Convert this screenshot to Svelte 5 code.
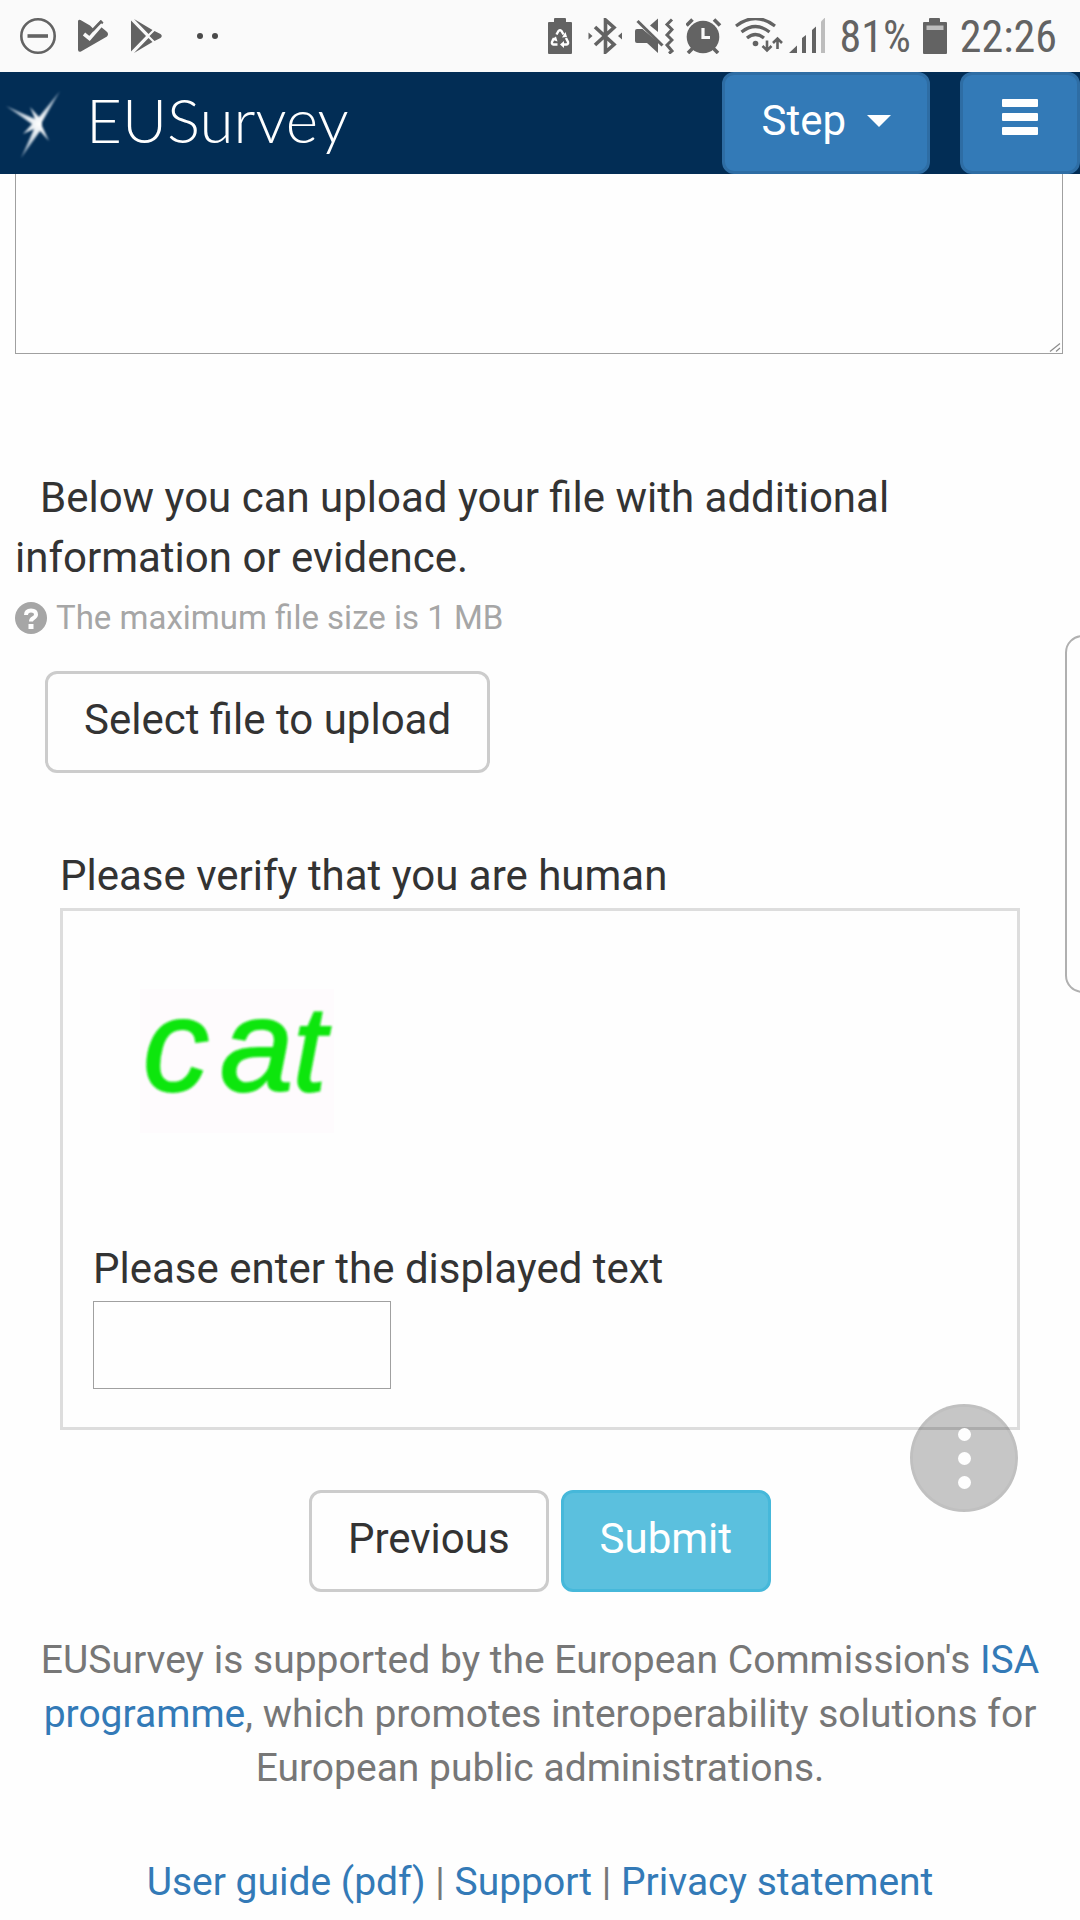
<script lang="ts">
	let comments = $state('');
	let captcha = $state('');

	const links = [
		{ label: 'User guide (pdf)', href: '#guide' },
		{ label: 'Support', href: '#support' },
		{ label: 'Privacy statement', href: '#privacy' }
	];
</script>

<div class="screen">
	<div class="status-bar">
		<div class="notifications">
			<svg width="36" height="36" viewBox="20 18 36 36" fill="none" stroke="#636363">
				<circle cx="38" cy="36" r="16.7" stroke-width="2.6" />
				<path d="M27.5 36h20.5" stroke-width="3.6" />
			</svg>
			<svg width="31" height="36" viewBox="78 18 31 36">
				<path d="M78 21.500q0-2.500 2.500-1.500l9.500 5.500 3 3 8-8.500 2.500 2.500-3 4 5.500 4.500q3.500 2.500 1 5.500L81 51.500q-3 1-3-2z" fill="#636363" />
				<path d="M84 34l5.500 4.500L102 24" fill="none" stroke="#fafafa" stroke-width="3.600" />
				<path d="M92.500 30.500l9-9.500" fill="none" stroke="#636363" stroke-width="2.600" />
			</svg>
			<svg width="32" height="36" viewBox="131 18 32 36" fill="#636363">
				<path d="M131 20.500L146 36 131 51.500zM134 19l18.500 11-4 4zM134 53l18.500-11-4-4zM154.500 31l6 3q2.500 2 0 4l-6 3-5-5z" />
			</svg>
			<svg class="dots" width="22" height="36" viewBox="197 18 22 36" fill="#4a4a4a">
				<circle cx="200" cy="36" r="3" />
				<circle cx="215" cy="36" r="3" />
			</svg>
		</div>
		<div class="indicators">
			<svg width="24" height="36" viewBox="547 18 24 36">
				<path d="M553 22v-3q0-1 1-1h10q1 0 1 1v3h5q1 0 1 1v30q0 1-1 1h-22q-1 0-1-1V23q0-1 1-1z" fill="#636363" />
				<path d="M555.500 34.500l2-3.500q1.500-1.500 3 0l2 3.500M565 38l2 4q.5 2-1.500 2.500h-4M556.500 44.500h-4q-2-.5-1.500-2.500l2-4" fill="none" stroke="#fff" stroke-width="2.400" />
				<path d="M561 37.500l5-.5-1.500-5zM563 41v7l-4-3.500zM550.500 39.500l4.500-3 1.500 5z" fill="#fff" />
			</svg>
			<svg width="39" height="36" viewBox="583 18 39 36">
				<path d="M594 27l19 17.500-8.500 7.500V20l8.500 7.500L594 45" fill="none" stroke="#636363" stroke-width="3.600" />
				<path d="M587.500 32.500l4 3.500-4 3.500zM621 32.500l-4 3.500 4 3.500z" fill="#636363" />
			</svg>
			<svg width="39" height="36" viewBox="634 18 39 36">
				<path d="M634 31q0-2 2-2h5.500L657 42v11L646 43h-10q-2 0-2-2zM649 25.500l8-7V32z" fill="#636363" />
				<path d="M636.500 21l25 24.500" fill="none" stroke="#636363" stroke-width="3" />
				<path d="M671 19.500l-5 5 5 5-5 5.500 5 5-5 5 5 6-3 2.500" fill="none" stroke="#636363" stroke-width="3" />
			</svg>
			<svg width="36" height="36" viewBox="685 18 36 36">
				<circle cx="702" cy="37" r="16.300" fill="#636363" />
				<path d="M685.500 25.500l6-6M713 19.500l6 6M692 48l-5 5M712 48l5 5" stroke="#636363" stroke-width="3.600" />
				<path d="M702 28v9.500h7" fill="none" stroke="#fafafa" stroke-width="3.200" />
			</svg>
			<svg width="94" height="36" viewBox="733 18 94 36">
				<g fill="none" stroke="#636363" stroke-width="3.200">
					<path d="M735 26q19.500-15 39 0M740.500 32q14-11 28 0M746 38q8.500-7 17 0" />
					<path d="M766 40.500v10M761.500 46l4.500 4.500 4.500-4.500M776.500 49V39M772 43l4.500-4.500 4.500 4.500" stroke-width="2.600" />
				</g>
				<circle cx="754.500" cy="43.500" r="2.800" fill="#636363" />
				<path d="M788 53l8-7.500V53zM801 38l4-3v18h-4zM811 30l4-3.500V53h-4z" fill="#636363" />
				<path d="M820 21.500l4-4V53h-4z" fill="#bdbdbd" />
			</svg>
			<span>81%</span>
			<svg width="25" height="36" viewBox="922 18 25 36">
				<path d="M928 22v-3q0-1 1-1h9q1 0 1 1v3h6q1 0 1 1v30q0 1-1 1h-22q-1 0-1-1V23q0-1 1-1z" fill="#636363" />
				<path d="M925.500 25.500h17v4.500h-17z" fill="#bdbdbd" />
			</svg>
			<span>22:26</span>
		</div>
	</div>

	<header>
		<a class="brand" href="#home">
			<svg width="60" height="76" viewBox="4 84 60 76" aria-hidden="true">
				<defs>
					<filter id="soft"><feGaussianBlur stdDeviation="0.9" /></filter>
					<radialGradient id="ray" gradientUnits="userSpaceOnUse" cx="39" cy="123" r="38">
						<stop offset="0" stop-color="#fff" />
						<stop offset="0.3" stop-color="#dfe7ee" />
						<stop offset="1" stop-color="#7a94ac" />
					</radialGradient>
				</defs>
				<path filter="url(#soft)" fill="url(#ray)" d="M60 90L42 121v4l7 15-9-10-19 27 13-29-11 5 9-10L6 105l29 13-5-12 9 10z" />
			</svg>
			<span>EUSurvey</span>
		</a>
		<div class="header-actions">
			<button class="btn primary step" type="button">
				Step
				<svg width="24" height="12" viewBox="0 0 24 12" fill="#fff"><path d="M0 0h24L12 12z" /></svg>
			</button>
			<button class="btn primary menu" type="button" aria-label="Menu">
				<svg width="36" height="36" viewBox="0 0 36 36" fill="#fff">
					<rect width="36" height="8" rx="1" />
					<rect y="14" width="36" height="8" rx="1" />
					<rect y="28" width="36" height="8" rx="1" />
				</svg>
			</button>
		</div>
	</header>

	<main>
		<div class="comments">
			<textarea aria-label="Comments" bind:value={comments}></textarea>
			<svg class="grip" width="12" height="9" viewBox="0 0 12 9" fill="none" stroke="#8c8c8c">
				<path d="M1 8.500L11 .500M7 8.500l4-3.500" stroke-width="1.200" />
			</svg>
		</div>

		<section class="upload">
			<p class="question">Below you can upload your file with additional information or evidence.</p>
			<p class="help">
				<svg width="32" height="32" viewBox="0 0 32 32">
					<circle cx="16" cy="16" r="16" fill="#a6a6a6" />
					<path d="M11 13q0-4.500 5-4.500t5 4q0 2-2.500 3.500t-2.500 3.500" fill="none" stroke="#fff" stroke-width="4" />
					<rect x="13.500" y="22" width="5" height="5" fill="#fff" />
				</svg>
				The maximum file size is 1 MB
			</p>
			<button class="btn default" type="button">Select file to upload</button>
		</section>

		<section class="verify">
			<p>Please verify that you are human</p>
			<div class="captcha-box">
				<svg class="captcha" width="194" height="150" viewBox="0 0 194 150" role="img">
					<defs>
						<filter id="smudge"><feGaussianBlur stdDeviation="0.8" /></filter>
					</defs>
					<rect y="4" width="194" height="144" fill="#fefbfd" />
					<g filter="url(#smudge)">
						<text class="glyph" x="3" y="106">c</text>
						<text class="glyph" x="80" y="106">a</text>
						<text class="glyph small" x="153" y="106">t</text>
					</g>
				</svg>
				<label for="captcha">Please enter the displayed text</label>
				<input id="captcha" type="text" autocomplete="off" bind:value={captcha} />
			</div>
		</section>

		<div class="actions">
			<button class="btn default" type="button">Previous</button>
			<button class="btn info" type="submit">Submit</button>
		</div>
	</main>

	<footer>
		<p>
			EUSurvey is supported by the European Commission's <a href="#isa">ISA programme</a>, which
			promotes interoperability solutions for European public administrations.
		</p>
		<nav>
			{#each links as link, i}
				{#if i > 0}{' | '}{/if}<a href={link.href}>{link.label}</a>
			{/each}
		</nav>
	</footer>

	<div class="edge-panel"></div>
	<button class="fab" type="button" aria-label="More options">
		<i></i><i></i><i></i>
	</button>
</div>

<style>
	:global(body) {
		background: #fefefe;
	}

	.screen {
		position: relative;
		overflow: hidden;
		font-family: Roboto, sans-serif;
		font-size: 42px;
		line-height: 60px;
		color: #333;
	}

	svg {
		display: block;
		flex: none;
	}

	p {
		margin: 0;
	}

	a {
		color: #337ab7;
		text-decoration: none;
	}

	.status-bar {
		display: flex;
		justify-content: space-between;
		align-items: center;
		height: 72px;
		padding: 0 23px 0 20px;
		background: #fafafa;
		color: #636363;
		font-family: 'Roboto Condensed', 'Liberation Sans Narrow', Roboto, sans-serif;
		font-size: 44px;
	}

	.indicators span {
		padding-top: 2px;
	}

	.notifications {
		display: flex;
		gap: 22px;
	}

	.dots {
		margin-left: 12px;
	}

	.indicators {
		display: flex;
		align-items: center;
		gap: 12px;
	}

	header {
		position: relative;
		display: flex;
		justify-content: space-between;
		height: 102px;
		background: #022d55;
	}

	.brand {
		display: flex;
		align-items: center;
		gap: 22px;
		padding-left: 4px;
		font-family: Lato, sans-serif;
		font-size: 62px;
		font-weight: 300;
		color: #fff;
	}

	.brand span {
		padding-bottom: 8px;
	}

	.header-actions {
		display: flex;
		gap: 30px;
	}

	.btn {
		padding: 16px 36px 20px;
		border: 3px solid;
		border-radius: 12px;
		font: inherit;
	}

	.primary {
		background: #337ab7;
		border-color: #2e6da4;
		color: #fff;
	}

	.step {
		display: flex;
		align-items: center;
		gap: 21px;
	}

	.menu {
		display: flex;
		align-items: center;
		padding: 12px 39px 24px;
	}

	.default {
		background: #fefefe;
		border-color: #ccc;
		color: #333;
	}

	.info {
		background: #5bc0de;
		border-color: #46b8da;
		color: #fff;
	}

	.comments {
		position: relative;
		margin: 0 17px 0 15px;
	}

	textarea {
		display: block;
		box-sizing: border-box;
		width: 100%;
		height: 180px;
		border: 1px solid #a0a0a0;
		border-top: 0;
		background: transparent;
		font: inherit;
		resize: none;
		outline: none;
	}

	.grip {
		position: absolute;
		right: 2px;
		bottom: 2px;
	}

	.upload {
		padding: 114px 15px 0;
	}

	.question {
		text-indent: 25px;
	}

	.help {
		display: flex;
		align-items: center;
		gap: 9px;
		font-size: 33px;
		color: #a6a6a6;
	}

	.upload .btn {
		display: block;
		margin: 23px 0 0 30px;
	}

	.verify {
		padding: 73px 60px 0;
	}

	.captcha-box {
		margin-top: 2px;
		padding: 74px 30px 38px;
		border: 3px solid #ddd;
	}

	.captcha {
		margin-left: 47px;
		overflow: visible;
	}

	.glyph {
		font-family: 'Liberation Sans', Arial, sans-serif;
		font-size: 132px;
		font-style: italic;
		fill: #0be60b;
		stroke: #0be60b;
		stroke-width: 2;
	}

	.small {
		font-size: 120px;
	}

	label {
		display: block;
		margin-top: 104px;
	}

	input {
		display: block;
		box-sizing: border-box;
		width: 298px;
		height: 88px;
		margin-top: 2px;
		padding: 6px 12px;
		border: 1px solid #a0a0a0;
		background: #fefefe;
		font: inherit;
	}

	.actions {
		display: flex;
		justify-content: center;
		gap: 12px;
		padding-top: 60px;
	}

	footer {
		padding: 41px 30px 12px;
		font-size: 39px;
		line-height: 54px;
		text-align: center;
		color: #777;
	}

	nav {
		margin-top: 60px;
	}

	.edge-panel {
		position: absolute;
		top: 635px;
		right: -20px;
		box-sizing: border-box;
		width: 35px;
		height: 358px;
		border: 2px solid #b0b0b0;
		border-radius: 18px;
	}

	.fab {
		position: absolute;
		top: 1404px;
		right: 62px;
		display: flex;
		flex-direction: column;
		align-items: center;
		justify-content: center;
		gap: 11px;
		width: 108px;
		height: 108px;
		padding: 0;
		border: 3px solid rgba(0, 0, 0, 0.03);
		border-radius: 50%;
		background: rgba(0, 0, 0, 0.22);
	}

	.fab i {
		width: 13px;
		height: 13px;
		border-radius: 50%;
		background: #fefefe;
	}
</style>
